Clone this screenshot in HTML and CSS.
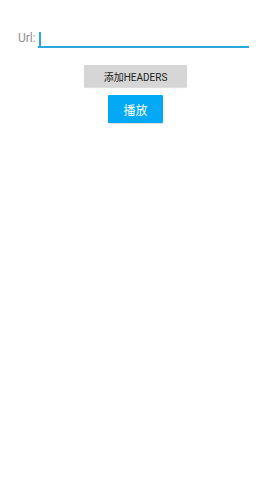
FILE: index.html
```html
<!DOCTYPE html>
<html lang="zh">
<head>
  <meta charset="utf-8">
  <title>Player</title>
  <link rel="stylesheet" href="styles.css">
</head>
<body>
  <div class="url-row">
    <span class="url-label">Url:</span>
    <div class="url-input">
      <span class="cursor"></span>
    </div>
  </div>

  <div class="actions">
    <button class="btn btn-gray">添加HEADERS</button>
    <button class="btn btn-blue">播放</button>
  </div>
</body>
</html>
```

FILE: styles.css
```css
body {
  margin: 0;
  padding: 0;
  width: 271px;
  height: 480px;
  background: #fff;
  font-family: Roboto, "Noto Sans CJK SC", sans-serif;
}

.url-row {
  display: flex;
  align-items: flex-end;
  padding: 31px 22px 0 18px;
}

.url-label {
  font-size: 12px;
  color: #8f8f8f;
  line-height: 14px;
  padding-bottom: 3px;
  margin-right: 2px;
}

.url-input {
  flex: 1;
  height: 15px;
  border-bottom: 2px solid #2aa8df;
  display: flex;
  align-items: flex-end;
}

.cursor {
  width: 2px;
  height: 14px;
  margin-left: 1px;
  background: #2aa8df;
}

.actions {
  display: flex;
  flex-direction: column;
  align-items: center;
  gap: 8px;
  margin-top: 17px;
}

.btn {
  border: none;
  font-family: Roboto, "Noto Sans CJK SC", sans-serif;
  padding: 0;
  border-radius: 1px;
}

.btn-gray {
  width: 103px;
  height: 22px;
  background: #d6d6d6;
  color: #222;
  font-size: 10px;
  box-shadow: 0 1px 1px rgba(0, 0, 0, 0.15);
}

.btn-blue {
  width: 55px;
  height: 28px;
  background: #03a9f4;
  color: #fff;
  font-size: 12px;
  box-shadow: 0 1px 1px rgba(0, 0, 0, 0.15);
}
```
